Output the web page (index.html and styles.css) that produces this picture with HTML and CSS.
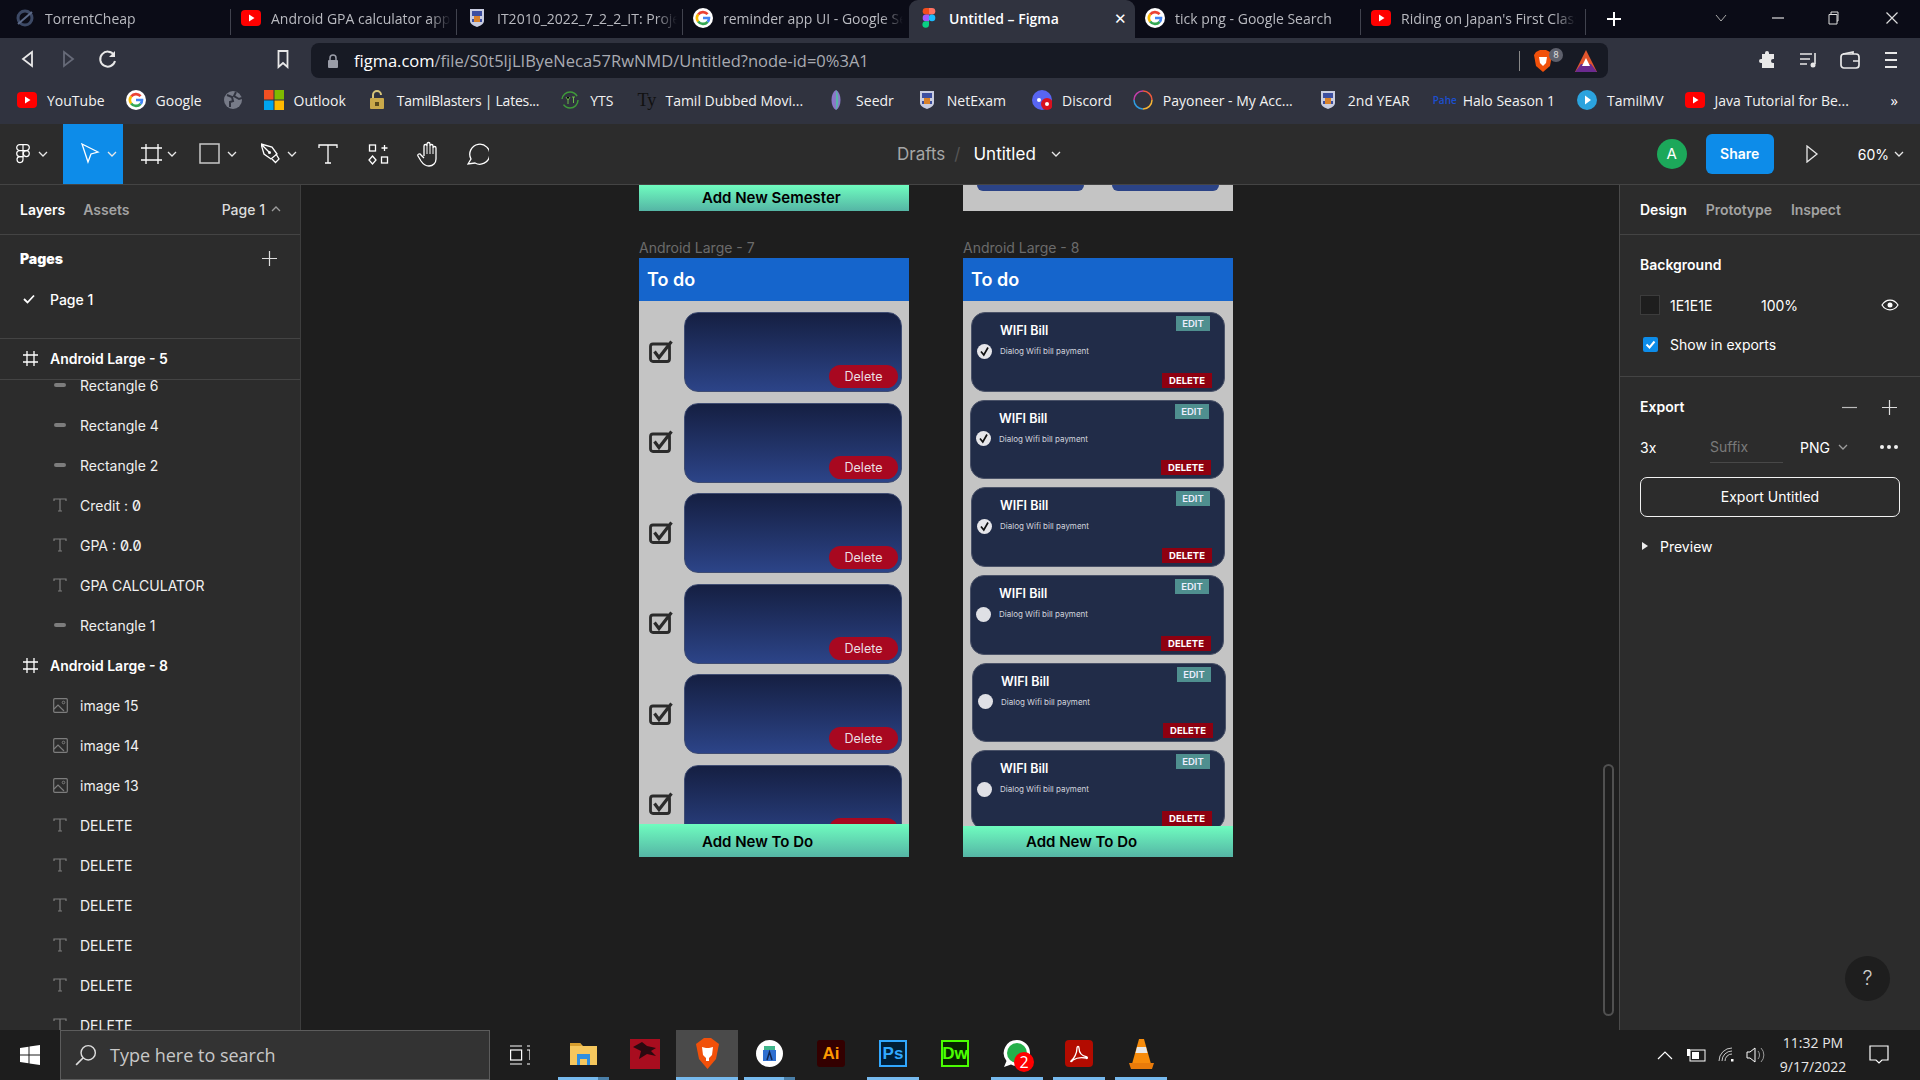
FILE: index.html
```html
<!DOCTYPE html>
<html lang="en">
<head>
  <meta charset="UTF-8" />
  <title>Untitled – Figma</title>
  <link rel="stylesheet" href="styles.css">
</head>
<body>
  <!-- shared icons -->
  <svg class="defs">
    <symbol id="yt" viewBox="0 0 20 20"><rect x="0" y="2" width="20" height="16" rx="4" fill="#f00"/><path d="M8 6.5l5.5 3.5L8 13.5z" fill="#fff"/></symbol>
    <symbol id="goog" viewBox="0 0 20 20"><circle cx="10" cy="10" r="10" fill="#fff"/><path d="M14.6 6.2A6 6 0 0 0 5.2 6.6" fill="none" stroke="#ea4335" stroke-width="2.6"/><path d="M5.2 6.4a6 6 0 0 0 0 7.2" fill="none" stroke="#fbbc05" stroke-width="2.6"/><path d="M5.2 13.4a6 6 0 0 0 9.4.4" fill="none" stroke="#34a853" stroke-width="2.6"/><path d="M14.6 13.9A6 6 0 0 0 16 10H10" fill="none" stroke="#4285f4" stroke-width="2.6"/></symbol>
    <symbol id="crest" viewBox="0 0 16 20"><path d="M1 1h14v12c0 3-4 5-7 6-3-1-7-3-7-6z" fill="#c9cde0"/><path d="M3 3h10v5H3z" fill="#3d4fa0"/><path d="M5 8h6v6H5z" fill="#d9822b"/><path d="M3 11h2v3H3zM11 11h2v3h-2z" fill="#3d4fa0"/></symbol>
    <symbol id="figma" viewBox="0 0 14 20"><path d="M7 0H4a3.3 3.3 0 0 0 0 6.6h3z" fill="#f24e1e"/><path d="M7 0h3a3.3 3.3 0 0 1 0 6.600H7z" fill="#ff7262"/><path d="M7 6.600H4a3.300 3.300 0 0 0 0 6.600h3z" fill="#a259ff"/><circle cx="10" cy="9.900" r="3.300" fill="#1abcfe"/><path d="M7 13.200H4a3.300 3.300 0 1 0 3 3.300z" fill="#0acf83"/></symbol>
    <symbol id="chev" viewBox="0 0 10 6"><path d="M1 1l4 4 4-4" fill="none" stroke="#e8e8e8" stroke-width="1.300"/></symbol>
    <symbol id="text-tool" viewBox="0 0 14 14"><path d="M1 3V1h12v2M7 1v12M5 13h4" fill="none" stroke="#7d7d7d" stroke-width="1.200"/></symbol>
    <symbol id="image" viewBox="0 0 15 15"><rect x=".7" y=".7" width="13.600" height="13.600" rx="1" fill="none" stroke="#7d7d7d" stroke-width="1.200"/><path d="M1 11l4-4 6 6" fill="none" stroke="#7d7d7d" stroke-width="1.200"/><circle cx="10.500" cy="4.500" r="1.300" fill="none" stroke="#7d7d7d"/></symbol>
    <symbol id="frame" viewBox="0 0 15 15"><path d="M4 0v15M11 0v15M0 4h15M0 11h15" fill="none" stroke="#fff" stroke-width="1.300"/></symbol>
    <symbol id="box-check" viewBox="0 0 25 23"><rect x="1.500" y="4" width="19" height="17.500" rx="2.500" fill="none" stroke="#2b2b2b" stroke-width="2.800"/><path d="M5.500 11.500l4.500 6L22.500 1.500" fill="none" stroke="#2b2b2b" stroke-width="3.200"/></symbol>
    <symbol id="tick" viewBox="0 0 15 15"><circle cx="7.500" cy="7.500" r="7.500" fill="#e6e6ea"/><path d="M4 7.500l2.800 3.500 4.200-7.500" fill="none" stroke="#111" stroke-width="1.700"/></symbol>
  </svg>

  <!-- browser tabs -->
  <div class="tabs">
    <div class="tab tab-first"><svg class="fav" viewBox="0 0 20 20"><circle cx="10" cy="10" r="7" fill="none" stroke="#3d4a66" stroke-width="3"/><path d="M3 16L17 4" stroke="#5c6a88" stroke-width="2"/></svg><span>TorrentCheap</span></div>
    <div class="tab"><svg class="fav"><use href="#yt"/></svg><span>Android GPA calculator app</span></div>
    <div class="tab"><svg class="fav"><use href="#crest"/></svg><span>IT2010_2022_7_2_2_IT: Project</span></div>
    <div class="tab"><svg class="fav"><use href="#goog"/></svg><span>reminder app UI - Google Search</span></div>
    <div class="tab tab-active"><svg class="fav"><use href="#figma"/></svg><span>Untitled – Figma</span><b class="tab-close">✕</b></div>
    <div class="tab"><svg class="fav"><use href="#goog"/></svg><span>tick png - Google Search</span></div>
    <div class="tab tab-last"><svg class="fav"><use href="#yt"/></svg><span>Riding on Japan's First Class</span></div>
    <svg class="new-tab" viewBox="0 0 16 16"><path d="M8 1v14M1 8h14" stroke="#fff" stroke-width="2"/></svg>
    <div class="win-controls">
      <svg viewBox="0 0 14 14"><path d="M2 4l5 6 5-6" fill="none" stroke="#aaa"/></svg>
      <svg viewBox="0 0 14 14"><path d="M1 7h12" stroke="#ddd" stroke-width="1.200"/></svg>
      <svg class="win-restore" viewBox="0 0 14 14"><path d="M3 3.500h8v9.500H3zM5 3.500V1h7v9h-1" fill="none" stroke="#ddd"/></svg>
      <svg viewBox="0 0 14 14"><path d="M1.500 1.500l11 11M12.500 1.500l-11 11" stroke="#ddd" stroke-width="1.200"/></svg>
    </div>
  </div>

  <!-- address bar -->
  <div class="addr-row">
    <svg class="nav-btn" viewBox="0 0 40 20"><path d="M25 3l-9 7 9 7z" fill="none" stroke="#e8e8e8" stroke-width="1.800"/></svg>
    <svg class="nav-btn" viewBox="0 0 40 20"><path d="M17 3l9 7-9 7z" fill="none" stroke="#666a78" stroke-width="1.800"/></svg>
    <svg class="nav-btn" viewBox="0 0 40 20"><path d="M27 6a7.500 7.500 0 1 0 1 6" fill="none" stroke="#e8e8e8" stroke-width="2"/><path d="M28 2v6h-6z" fill="#e8e8e8"/></svg>
    <svg class="nav-btn bookmark-btn" viewBox="0 0 40 20"><path d="M15.500 2h9v16l-4.500-4-4.500 4z" fill="none" stroke="#e8e8e8" stroke-width="1.800"/></svg>
    <div class="addr-bar">
      <svg class="lock" viewBox="0 0 12 14"><path d="M3 6V4a3 3 0 0 1 6 0v2" fill="none" stroke="#9a9da8" stroke-width="1.500"/><rect x="1" y="6" width="10" height="8" rx="1" fill="#9a9da8"/></svg>
      <span class="url"><b>figma.com</b>/file/S0t5ljLIByeNeca57RwNMD/Untitled?node-id=0%3A1</span>
      <i class="addr-sep"></i>
      <svg class="brave-shield" viewBox="0 0 20 24"><path d="M3 3l4-2h6l4 2 2 3-2 11-7 6-7-6L1 6z" fill="#f1500a"/><path d="M6 8h8l-1 6-3 3-3-3z" fill="#fff"/></svg>
      <span class="shield-badge">8</span>
      <svg class="rewards" viewBox="0 0 24 24"><path d="M12 1l11 22H1z" fill="#e2552c"/><path d="M1 23l6-8h10l6 8z" fill="#6b2a8f"/><path d="M12 9l4 8H8z" fill="#fff"/></svg>
    </div>
    <div class="addr-tools">
      <svg viewBox="0 0 20 20"><path d="M7 3a2 2 0 0 1 4 0v1h5v5h-1a2 2 0 0 0 0 4h1v5H4v-5H3a2 2 0 0 1 0-4h1V4h3z" fill="#e8e8e8"/></svg>
      <svg viewBox="0 0 20 20"><path d="M1 4h12M1 9h10M1 14h7" stroke="#e8e8e8" stroke-width="1.600"/><path d="M16 3v11" stroke="#e8e8e8" stroke-width="1.600"/><circle cx="14" cy="15" r="2.500" fill="#e8e8e8"/></svg>
      <svg viewBox="0 0 20 20"><rect x="1" y="4" width="18" height="14" rx="3" fill="none" stroke="#e8e8e8" stroke-width="1.700"/><path d="M3 4l10-2v2M13 11h6" fill="none" stroke="#e8e8e8" stroke-width="1.700"/></svg>
      <svg viewBox="0 0 20 20"><path d="M4 3h12M4 10h12M4 17h12" stroke="#e8e8e8" stroke-width="2"/></svg>
    </div>
  </div>

  <!-- bookmarks -->
  <div class="bookmarks">
    <div class="bm"><svg class="fav"><use href="#yt"/></svg>YouTube</div>
    <div class="bm"><svg class="fav"><use href="#goog"/></svg>Google</div>
    <div class="bm"><svg class="fav" viewBox="0 0 20 20"><circle cx="10" cy="10" r="9" fill="#777b88"/><path d="M4 5l5 2 1 4-3 1v5M13 2l-2 4 5 3 3-1" fill="none" stroke="#30333f" stroke-width="2"/></svg></div>
    <div class="bm"><svg class="fav" viewBox="0 0 20 20"><path d="M0 0h9.500v9.500H0z" fill="#f25022"/><path d="M10.500 0H20v9.500h-9.500z" fill="#7fba00"/><path d="M0 10.500h9.500V20H0z" fill="#00a4ef"/><path d="M10.500 10.500H20V20h-9.500z" fill="#ffb900"/></svg>Outlook</div>
    <div class="bm"><svg class="fav" viewBox="0 0 20 20"><rect x="3" y="8" width="14" height="11" rx="1" fill="#c9a94a"/><path d="M6 8V5a4 4 0 0 1 8 0" fill="none" stroke="#d8c67a" stroke-width="2"/><path d="M8 12h4v4H8z" fill="#5a4a1a"/></svg>TamilBlasters | Lates...</div>
    <div class="bm"><svg class="fav" viewBox="0 0 20 20"><circle cx="10" cy="10" r="8" fill="none" stroke="#3f9b3a" stroke-width="1.500" stroke-dasharray="20 6"/><path d="M6 7l2 3 2-3M8 10v4M12 7h3M13.500 7v6" stroke="#6dbb4a"/></svg>YTS</div>
    <div class="bm"><span class="ty">Ty</span>Tamil Dubbed Movi...</div>
    <div class="bm"><svg class="fav" viewBox="0 0 20 20"><path d="M10 0c6 3 6 17 0 20C4 17 4 3 10 0z" fill="#8a78c8"/><path d="M10 0c3 4 3 16 0 20" fill="#58b6a8"/></svg>Seedr</div>
    <div class="bm"><svg class="fav"><use href="#crest"/></svg>NetExam</div>
    <div class="bm"><svg class="fav" viewBox="0 0 20 20"><circle cx="10" cy="10" r="10" fill="#5865f2"/><circle cx="7" cy="10" r="2" fill="#fff"/><circle cx="15" cy="14" r="6" fill="#d8111f"/><circle cx="15" cy="14" r="2" fill="#fff"/></svg>Discord</div>
    <div class="bm"><svg class="fav" viewBox="0 0 20 20"><path d="M10 1a9 9 0 0 1 9 9" fill="none" stroke="#ef5a3c" stroke-width="1.500"/><path d="M19 10a9 9 0 0 1-9 9" fill="none" stroke="#f5b335" stroke-width="1.500"/><path d="M10 19a9 9 0 0 1-9-9" fill="none" stroke="#2f9ce0" stroke-width="1.500"/><path d="M1 10a9 9 0 0 1 9-9" fill="none" stroke="#c23ea8" stroke-width="1.500"/></svg>Payoneer - My Acc...</div>
    <div class="bm"><svg class="fav"><use href="#crest"/></svg>2nd YEAR</div>
    <div class="bm"><span class="pahe">Pahe</span>Halo Season 1</div>
    <div class="bm"><svg class="fav" viewBox="0 0 20 20"><circle cx="10" cy="10" r="10" fill="#2ba3de"/><path d="M8 5.500l6 4.500-6 4.500z" fill="#fff"/></svg>TamilMV</div>
    <div class="bm"><svg class="fav"><use href="#yt"/></svg>Java Tutorial for Be...</div>
    <div class="bm-more">»</div>
  </div>

  <!-- figma toolbar -->
  <div class="toolbar">
    <div class="tool tool-logo">
      <svg class="tool-icon" viewBox="0 0 14 20"><g fill="none" stroke="#fff" stroke-width="1.200"><path d="M7 .6H3.700a3 3 0 0 0 0 6H7zM7 .6h3.300a3 3 0 0 1 0 6H7zM7 6.600H3.700a3 3 0 0 0 0 6H7z"/><circle cx="10.300" cy="9.600" r="3"/><path d="M7 12.600H3.700a3 3 0 1 0 3.300 3z"/></g></svg>
      <svg class="chev"><use href="#chev"/></svg>
    </div>
    <div class="tool tool-on">
      <svg class="tool-icon" viewBox="0 0 22 22"><path d="M1 1l16 8-7 2-3 8z" fill="none" stroke="#fff" stroke-width="1.300"/></svg>
      <svg class="chev"><use href="#chev"/></svg>
    </div>
    <div class="tool">
      <svg class="tool-icon" viewBox="0 0 22 22"><path d="M5 1v20M17 1v20M0 5h21M0 17h21" fill="none" stroke="#fff" stroke-width="1.300"/></svg>
      <svg class="chev"><use href="#chev"/></svg>
    </div>
    <div class="tool tool-rect">
      <svg class="tool-icon" viewBox="0 0 22 22"><rect x="1" y="1" width="19" height="19" fill="none" stroke="#c8c8c8" stroke-width="1.500"/></svg>
      <svg class="chev"><use href="#chev"/></svg>
    </div>
    <div class="tool">
      <svg class="tool-icon" viewBox="0 0 22 22"><path d="M0 1l11 3 5 7-6 5-7-5zM0 1l8 8" fill="none" stroke="#fff" stroke-width="1.300"/><circle cx="8.500" cy="9.500" r="1.500" fill="#fff"/><path d="M11 16l3.500 3.500 3.500-3.500-3-5" fill="none" stroke="#fff" stroke-width="1.300"/></svg>
      <svg class="chev"><use href="#chev"/></svg>
    </div>
    <div class="tool-plain"><svg class="tool-icon" viewBox="0 0 22 22"><path d="M2 5V2h18v3M11 2v18M8 20h6" fill="none" stroke="#fff" stroke-width="1.300"/></svg></div>
    <div class="tool-plain"><svg class="tool-icon" viewBox="0 0 22 22"><g fill="none" stroke="#fff" stroke-width="1.300"><rect x="2.500" y="2" width="6" height="6"/><rect x="14.500" y="14" width="6" height="6"/><path d="M5.500 13l3.500 4-3.500 4-3.500-4zM17.500 2v6M14.500 5h6"/></g></svg></div>
    <div class="tool-plain"><svg class="tool-hand" viewBox="0 0 22 26"><path d="M7 15V5a1.500 1.500 0 0 1 3 0V3a1.500 1.500 0 0 1 3 0v2a1.500 1.500 0 0 1 3 0v2a1.500 1.500 0 0 1 3 0v11c0 4-3 7-7 7-4 0-6-2-8-5l-3-5c-1-2 2-3 3-1l3 3" fill="none" stroke="#fff" stroke-width="1.300"/><path d="M10 5v8M13 5v8M16 7v6" stroke="#fff"/></svg></div>
    <div class="tool-plain"><svg class="tool-icon" viewBox="0 0 22 22"><path d="M1 21l3-5a10 10 0 1 1 4 4z" fill="none" stroke="#fff" stroke-width="1.300"/></svg></div>

    <div class="file-title">
      <span class="drafts">Drafts</span><span class="slash">/</span><span class="file-name">Untitled</span>
      <svg class="chev file-chev"><use href="#chev"/></svg>
    </div>

    <div class="tool-right">
      <div class="avatar">A</div>
      <div class="share">Share</div>
      <svg class="play" viewBox="0 0 14 18"><path d="M2 1l10 8-10 8z" fill="none" stroke="#e8e8e8" stroke-width="1.300"/></svg>
      <span class="zoom-level">60%</span>
      <svg class="chev"><use href="#chev"/></svg>
    </div>
  </div>

  <div class="workspace">
    <!-- layers panel -->
    <aside class="left-panel">
      <div class="panel-tabs left-tabs">
        <span class="on">Layers</span><span>Assets</span>
        <span class="page-pick">Page 1 <svg class="chev flip"><use href="#chev"/></svg></span>
      </div>
      <div class="pages">
        <div class="pages-head"><b>Pages</b><svg class="plus" viewBox="0 0 15 15"><path d="M7.500 0v15M0 7.500h15" stroke="#ddd" stroke-width="1.200"/></svg></div>
        <div class="page-row"><svg viewBox="0 0 12 10"><path d="M1 5l3.500 3.500L11 1.500" fill="none" stroke="#fff" stroke-width="1.800"/></svg>Page 1</div>
      </div>
      <div class="layer-frame layer-sticky"><svg><use href="#frame"/></svg>Android Large - 5</div>
      <div class="layer-list">
        <div class="layer"><i class="dash"></i>Rectangle 6</div>
        <div class="layer"><i class="dash"></i>Rectangle 4</div>
        <div class="layer"><i class="dash"></i>Rectangle 2</div>
        <div class="layer"><svg><use href="#text-tool"/></svg><span>Credit : <span class="zero">0</span></span></div>
        <div class="layer"><svg><use href="#text-tool"/></svg><span>GPA : <span class="zero">0.0</span></span></div>
        <div class="layer"><svg><use href="#text-tool"/></svg>GPA CALCULATOR</div>
        <div class="layer"><i class="dash"></i>Rectangle 1</div>
        <div class="layer-frame"><svg><use href="#frame"/></svg>Android Large - 8</div>
        <div class="layer"><svg class="img-icon"><use href="#image"/></svg>image 15</div>
        <div class="layer"><svg class="img-icon"><use href="#image"/></svg>image 14</div>
        <div class="layer"><svg class="img-icon"><use href="#image"/></svg>image 13</div>
        <div class="layer"><svg><use href="#text-tool"/></svg>DELETE</div>
        <div class="layer"><svg><use href="#text-tool"/></svg>DELETE</div>
        <div class="layer"><svg><use href="#text-tool"/></svg>DELETE</div>
        <div class="layer"><svg><use href="#text-tool"/></svg>DELETE</div>
        <div class="layer"><svg><use href="#text-tool"/></svg>DELETE</div>
        <div class="layer"><svg><use href="#text-tool"/></svg>DELETE</div>
      </div>
    </aside>

    <!-- canvas, frames sit freely on it -->
    <main class="canvas">
      <div class="frame-stub stub-a"><div class="add-bar add-top">Add New Semester</div></div>
      <div class="frame-stub stub-b"><i class="stub-pill"></i><i class="stub-pill"></i></div>

      <div class="art art-a">
        <div class="art-label">Android Large - 7</div>
        <div class="phone">
          <div class="phone-head">To do</div>
          <div class="phone-list list-a">
            <div class="todo-row"><svg class="box-check"><use href="#box-check"/></svg><div class="blank-card"><span class="pill-delete">Delete</span></div></div>
            <div class="todo-row"><svg class="box-check"><use href="#box-check"/></svg><div class="blank-card"><span class="pill-delete">Delete</span></div></div>
            <div class="todo-row"><svg class="box-check"><use href="#box-check"/></svg><div class="blank-card"><span class="pill-delete">Delete</span></div></div>
            <div class="todo-row"><svg class="box-check"><use href="#box-check"/></svg><div class="blank-card"><span class="pill-delete">Delete</span></div></div>
            <div class="todo-row"><svg class="box-check"><use href="#box-check"/></svg><div class="blank-card"><span class="pill-delete">Delete</span></div></div>
            <div class="todo-row"><svg class="box-check"><use href="#box-check"/></svg><div class="blank-card"><span class="pill-delete"></span></div></div>
          </div>
          <div class="add-bar add-a">Add New To Do</div>
        </div>
      </div>

      <div class="art art-b">
        <div class="art-label">Android Large - 8</div>
        <div class="phone">
          <div class="phone-head">To do</div>
          <div class="phone-list list-b">
            <div class="bill"><svg class="radio"><use href="#tick"/></svg><b class="bill-title">WIFI Bill</b><span class="tag-edit">EDIT</span><span class="bill-desc">Dialog Wifi bill payment</span><span class="tag-delete">DELETE</span></div>
            <div class="bill nudge-l"><svg class="radio"><use href="#tick"/></svg><b class="bill-title">WIFI Bill</b><span class="tag-edit">EDIT</span><span class="bill-desc">Dialog Wifi bill payment</span><span class="tag-delete">DELETE</span></div>
            <div class="bill"><svg class="radio"><use href="#tick"/></svg><b class="bill-title">WIFI Bill</b><span class="tag-edit">EDIT</span><span class="bill-desc">Dialog Wifi bill payment</span><span class="tag-delete">DELETE</span></div>
            <div class="bill nudge-l"><i class="radio radio-off"></i><b class="bill-title">WIFI Bill</b><span class="tag-edit">EDIT</span><span class="bill-desc">Dialog Wifi bill payment</span><span class="tag-delete">DELETE</span></div>
            <div class="bill nudge-r"><i class="radio radio-off"></i><b class="bill-title">WIFI Bill</b><span class="tag-edit">EDIT</span><span class="bill-desc">Dialog Wifi bill payment</span><span class="tag-delete">DELETE</span></div>
            <div class="bill"><i class="radio radio-off"></i><b class="bill-title">WIFI Bill</b><span class="tag-edit">EDIT</span><span class="bill-desc">Dialog Wifi bill payment</span><span class="tag-delete">DELETE</span></div>
          </div>
          <div class="add-bar add-b">Add New To Do</div>
        </div>
      </div>

      <i class="canvas-scroll"></i>
    </main>

    <!-- design panel -->
    <aside class="right-panel">
      <div class="panel-tabs right-tabs"><span class="on">Design</span><span>Prototype</span><span>Inspect</span></div>
      <section class="bg-section">
        <b class="sec-title">Background</b>
        <div class="bg-row">
          <i class="swatch"></i><span>1E1E1E</span><span>100%</span>
          <svg class="eye" viewBox="0 0 18 12"><path d="M1 6c4-6.500 12-6.500 16 0-4 6.500-12 6.500-16 0z" fill="none" stroke="#fff" stroke-width="1.200"/><circle cx="9" cy="6" r="2.500" fill="#fff"/></svg>
        </div>
        <label class="export-check"><i class="checkbox"><svg viewBox="0 0 15 15"><path d="M3.500 7.500l3 3 5-6" fill="none" stroke="#fff" stroke-width="2"/></svg></i>Show in exports</label>
      </section>
      <section class="export-section">
        <div class="export-head"><b class="sec-title">Export</b>
          <svg viewBox="0 0 15 15"><path d="M0 7.500h15" stroke="#bbb" stroke-width="1.200"/></svg>
          <svg viewBox="0 0 15 15"><path d="M7.500 0v15M0 7.500h15" stroke="#ddd" stroke-width="1.200"/></svg>
        </div>
        <div class="export-row">
          <span>3x</span><span class="suffix">Suffix</span>
          <span class="png">PNG <svg class="chev dim"><use href="#chev"/></svg></span>
          <span class="dots"><i></i><i></i><i></i></span>
        </div>
        <div class="export-btn">Export Untitled</div>
        <div class="preview-row"><i class="caret"></i>Preview</div>
      </section>
      <div class="help">?</div>
    </aside>
  </div>

  <!-- windows taskbar -->
  <footer class="taskbar">
    <div class="win-logo"><svg viewBox="0 0 20 20"><path d="M0 3l8.500-1.200v7.700H0zM9.500 1.600L20 0v9.500H9.500zM0 10.500h8.500v7.700L0 17zM9.500 10.500H20V20L9.500 18.400z" fill="#fff"/></svg></div>
    <div class="search-box">
      <svg viewBox="0 0 20 20"><circle cx="12" cy="8" r="6.500" fill="none" stroke="#ddd" stroke-width="1.300"/><path d="M7.500 12.500L1 19" stroke="#ddd" stroke-width="1.500"/></svg>
      <span>Type here to search</span>
    </div>
    <div class="task-view"><svg viewBox="0 0 20 20"><path d="M0 1h12M0 19h12" stroke="#fff" stroke-width="1.200"/><rect x=".6" y="5" width="11" height="10" fill="none" stroke="#fff" stroke-width="1.200"/><path d="M17 1h3M17 5h3v10M17 19h3" fill="none" stroke="#fff" stroke-width="1.200"/></svg></div>
    <div class="apps">
      <div class="app run run-short"><svg class="ic-folder" viewBox="0 0 27 23"><path d="M0 1h10l3 3h14v19H0z" fill="#f5c75d"/><path d="M0 1h10l2 3H0z" fill="#d69e2e"/><path d="M7 12h13v11h-3v-6h-7v6H7z" fill="#2f8fdf"/></svg></div>
      <div class="app"><svg class="ic-msi" viewBox="0 0 30 30"><rect width="30" height="30" fill="#a80d1f"/><path d="M3 8l9-5 5 4 9 2-5 3 5 5-9-2-8 5 2-8z" fill="#2a0a10"/></svg></div>
      <div class="app app-active run"><svg class="ic-brave" viewBox="0 0 25 31"><path d="M5 3l4-3h7l4 3 4 3-3 15-8.500 10L4 21 1 6z" fill="#f1500a"/><path d="M7 9l4 1h3l4-1-1 8-3 3v3h-3v-3l-3-3z" fill="#fff"/></svg></div>
      <div class="app run run-short"><svg class="ic-studio" viewBox="0 0 27 27"><circle cx="13.500" cy="13.500" r="13.500" fill="#fff"/><rect x="8" y="6" width="11" height="5" fill="#3fb68b"/><rect x="7" y="10" width="13" height="11" fill="#2f6fd0"/><path d="M11 20l2.500-8 2.500 8" fill="none" stroke="#12264f" stroke-width="1.500"/></svg></div>
      <div class="app"><span class="tile tile-ai">Ai</span></div>
      <div class="app run"><span class="tile tile-ps">Ps</span></div>
      <div class="app"><span class="tile tile-dw">Dw</span></div>
      <div class="app run">
        <svg viewBox="0 0 30 30"><path d="M15 1a13 13 0 0 1 0 26c-2 0-4-.500-6-1.500L2 28l2.500-6A13 13 0 0 1 15 1z" fill="#fff"/><circle cx="15" cy="14" r="10" fill="#25b04a"/></svg>
        <span class="wa-badge">2</span>
      </div>
      <div class="app run"><span class="tile tile-pdf"><svg viewBox="0 0 20 20"><path d="M2 17c3-2 6-8 6-13 0-2 2-2 2 0 0 5 3 8 8 9 1 1 0 2-1 1-5-1-10 0-13 2-1 2-3 2-2 1z" fill="none" stroke="#fff" stroke-width="1.300"/></svg></span></div>
      <div class="app run"><svg class="ic-vlc" viewBox="0 0 25 30"><path d="M10 0h5l7 25H3z" fill="#f78c0c"/><path d="M8 8h9l1.500 6h-12z" fill="#e8e8e8"/><path d="M0 24h25l-2 6H2z" fill="#e97b0a"/></svg></div>
    </div>
    <div class="tray">
      <svg class="t-chev" viewBox="0 0 16 10"><path d="M1 9l7-7 7 7" fill="none" stroke="#fff" stroke-width="1.200"/></svg>
      <svg class="t-batt" viewBox="0 0 20 16"><rect x="4" y="3" width="15" height="11" fill="none" stroke="#fff"/><rect x="6" y="5" width="7" height="7" fill="#fff"/><path d="M1 2v7h3V2" fill="#fff"/></svg>
      <svg class="t-wifi" viewBox="0 0 18 18"><path d="M1 15a13 13 0 0 1 13-13M4 15a10 10 0 0 1 10-10M7 15a7 7 0 0 1 7-7" fill="none" stroke="#c8c8c8"/><rect x="13" y="13" width="2.500" height="2.500" fill="#fff"/></svg>
      <svg class="t-vol" viewBox="0 0 20 18"><path d="M1 6h3l5-4v14l-5-4H1z" fill="none" stroke="#fff"/><path d="M12 5a6 6 0 0 1 0 8M15 2a10 10 0 0 1 0 14" fill="none" stroke="#999"/></svg>
      <div class="clock"><span>11:32 PM</span><span>9/17/2022</span></div>
      <svg class="t-note" viewBox="0 0 20 20"><path d="M1 1h18v14h-6l-3 3-3-3H1z" fill="none" stroke="#fff" stroke-width="1.200"/></svg>
    </div>
  </footer>
</body>
</html>
```

FILE: styles.css
```css
* { box-sizing: border-box; }
html, body { margin: 0; height: 100%; }
body {
  width: 1920px;
  height: 1080px;
  overflow: hidden;
  display: flex;
  flex-direction: column;
  font-family: "Inter", "Liberation Sans", sans-serif;
  color: #fff;
  background: #1e1e1e;
}
i { display: block; font-style: normal; }
.defs { display: none; }
.fav { width: 20px; height: 20px; flex: none; }

/* browser tabs */
.tabs {
  flex: 0 0 38px;
  display: flex;
  background: #0b0c17;
  font-family: "Open Sans", sans-serif;
  font-size: 14px;
}
.tab {
  flex: 0 0 226px;
  display: flex;
  align-items: center;
  gap: 10px;
  padding: 0 6px 2px 10px;
  color: #b9bac0;
  position: relative;
  overflow: hidden;
  white-space: nowrap;
}
.tab span {
  flex: 1;
  overflow: hidden;
  -webkit-mask-image: linear-gradient(to right, #000 88%, transparent);
  mask-image: linear-gradient(to right, #000 88%, transparent);
}
.tab::after {
  content: "";
  position: absolute;
  right: 0;
  top: 9px;
  bottom: 3px;
  width: 1px;
  background: #41434e;
}
.tab-first { flex-basis: 231px; padding-left: 15px; }
.tab-active {
  background: #30333f;
  color: #fff;
  font-weight: 600;
  border-radius: 9px 9px 0 0;
  flex-basis: 226px;
}
.tab-active span { -webkit-mask-image: none; mask-image: none; }
.tab-active::after, .tab:nth-child(4)::after { display: none; }
.tab-close { font-size: 15px; font-weight: 400; margin-right: 2px; }
.tab-last { flex-basis: 225px; padding-right: 10px; }
.new-tab { width: 16px; height: 16px; margin: 11px 0 0 20px; }
.win-controls { margin-left: auto; display: flex; }
.win-controls svg { width: 14px; height: 14px; margin: 11px 21.5px 0; }
.win-controls .win-restore { transform: translateX(-2px); }

/* address row */
.addr-row {
  flex: 0 0 40px;
  display: flex;
  align-items: center;
  padding-left: 7px;
  background: #30333f;
}
.nav-btn { width: 40px; height: 20px; flex: none; margin-top: 2px; }
.bookmark-btn { margin-left: 136px; }
.addr-bar {
  margin-left: 8px;
  width: 1297px;
  height: 35px;
  margin-top: 5px;
  border-radius: 8px;
  background: #171a24;
  display: flex;
  align-items: center;
  padding-left: 16px;
  position: relative;
}
.lock { width: 12px; height: 14px; margin-right: 15px; }
.url {
  font-family: "Open Sans", sans-serif;
  font-size: 16.500px;
  color: #a9abb2;
  white-space: nowrap;
}
.url b { color: #fff; font-weight: 400; }
.addr-sep { margin-left: auto; width: 1px; height: 20px; background: #888; }
.brave-shield { width: 20px; height: 24px; margin-left: 13px; }
.shield-badge {
  position: absolute;
  right: 45px;
  top: 5px;
  width: 14px;
  height: 14px;
  border-radius: 50%;
  background: #5e606c;
  font-size: 9px;
  line-height: 14px;
  text-align: center;
  color: #ddd;
}
.rewards { width: 24px; height: 24px; margin: 0 10px 0 21px; }
.addr-tools { display: flex; gap: 21px; margin-left: 150px; margin-top: 4px; }
.addr-tools svg { width: 20px; height: 20px; }

/* bookmarks */
.bookmarks {
  flex: 0 0 46px;
  display: flex;
  align-items: center;
  gap: 21px;
  padding: 0 0 2px 17px;
  background: #30333f;
  font-family: "Open Sans", sans-serif;
  font-size: 14px;
  white-space: nowrap;
  position: relative;
}
.bm { display: flex; align-items: center; gap: 10px; color: #f2f2f2; }
.bm:nth-child(5) { letter-spacing: -.25px; }
.bm:nth-child(7) { margin-left: 3px; }
.bm:nth-child(8) { margin-left: 2px; }
.bm:nth-child(9) { margin-left: 2px; }
.bm:nth-child(10) { margin-left: 5px; }
.bm:nth-child(12) { margin-left: 4px; }
.bm:nth-child(13) { margin-left: 2px; }
.bm:nth-child(14) { margin-left: 1px; }
.ty { font-family: "Liberation Serif", serif; color: #111; font-size: 18px; width: 18px; }
.pahe { font-size: 10px; color: #1b4fd0; font-weight: 600; width: 20px; }
.bm-more { position: absolute; right: 22px; font-size: 15px; }

/* figma toolbar */
.toolbar {
  flex: 0 0 61px;
  display: flex;
  align-items: stretch;
  background: #2c2c2c;
  border-bottom: 1px solid #444;
}
.tool {
  flex: 0 0 60px;
  display: flex;
  align-items: center;
  gap: 4px;
  padding-left: 18px;
}
.tool-logo { flex-basis: 63px; padding-left: 16px; gap: 8px; }
.tool-logo .tool-icon { width: 14px; height: 20px; }
.tool-on { background: #0d8ce9; }
.tool-rect { padding-left: 16px; gap: 6px; }
.tool-plain { flex: 0 0 50px; display: flex; align-items: center; justify-content: center; }
.tool-icon { width: 22px; height: 22px; }
.tool-hand { width: 22px; height: 26px; }
.chev { width: 10px; height: 6px; flex: none; }
.flip { transform: rotate(180deg); opacity: .6; }
.dim { opacity: .6; }
.file-title {
  margin-left: 394px;
  display: flex;
  align-items: center;
  font-size: 17px;
}
.drafts { color: #a6a6a6; }
.slash { color: #555; margin: 0 13px 0 9px; }
.file-chev { margin-left: 15px; }
.tool-right {
  margin-left: auto;
  display: flex;
  align-items: center;
  padding-right: 16px;
}
.avatar {
  width: 30px;
  height: 30px;
  border-radius: 50%;
  background: #1ca85a;
  font-size: 15px;
  line-height: 30px;
  text-align: center;
}
.share {
  width: 68px;
  height: 40px;
  margin-left: 19px;
  border-radius: 6px;
  background: #0d8ce9;
  font-size: 14px;
  font-weight: 600;
  line-height: 40px;
  text-align: center;
}
.play { width: 14px; height: 18px; margin-left: 31px; }
.zoom-level { font-size: 14px; margin: 0 5px 0 39px; }

/* main area */
.workspace { flex: 1; min-height: 0; display: flex; }
.left-panel, .right-panel {
  flex: 0 0 301px;
  background: #2c2c2c;
  font-size: 14px;
  display: flex;
  flex-direction: column;
  overflow: hidden;
}
.left-panel { border-right: 1px solid #3e3e3e; }
.right-panel { border-left: 1px solid #4a4a4a; position: relative; }
.panel-tabs {
  flex: 0 0 50px;
  display: flex;
  align-items: center;
  gap: 18px;
  padding: 0 0 1px 20px;
  font-weight: 600;
  color: #a3a3a3;
  border-bottom: 1px solid #444;
}
.right-tabs { gap: 19px; letter-spacing: -.05px; }
.panel-tabs .on { color: #fff; }
.page-pick { margin-left: auto; margin-right: 19px; color: #ddd; font-weight: 500; display: flex; align-items: center; gap: 6px; }
.pages { flex: 0 0 104px; padding: 13px 23px 0 20px; border-bottom: 1px solid #444; }
.pages-head { display: flex; justify-content: space-between; align-items: center; height: 20px; font-weight: 600; }
.plus { width: 15px; height: 15px; }
.page-row { display: flex; align-items: center; height: 20px; margin-top: 21px; font-weight: 500; padding-left: 3px; }
.page-row svg { width: 12px; height: 10px; margin-right: 15px; }
.layer-sticky { border-bottom: 1px solid #444; flex: 0 0 41px !important; }
.layer-frame {
  flex: 0 0 40px;
  height: 40px;
  display: flex;
  align-items: center;
  padding: 0 0 2px 23px;
  font-weight: 600;
}
.layer-frame svg { width: 15px; height: 15px; margin-right: 12px; }
.layer-list { flex: 1; min-height: 0; overflow: hidden; }
.layer-list > :first-child { margin-top: -14px; }
.layer {
  height: 40px;
  display: flex;
  align-items: center;
  padding: 0 0 2px 53px;
  color: #f0f0f0;
}
.layer svg { width: 14px; height: 14px; margin-right: 13px; flex: none; }
.layer .img-icon { width: 15px; height: 15px; margin-right: 12px; }
.dash { width: 12px; height: 4px; margin: 0 14px 0 1px; border-radius: 2px; background: #7d7d7d; }
.zero { font-feature-settings: "zero"; font-weight: 500; }

/* canvas */
.canvas { flex: 1; position: relative; overflow: hidden; background: #1e1e1e; }
.frame-stub { position: absolute; top: 0; width: 270px; height: 26px; }
.stub-a { left: 338px; }
.stub-b {
  left: 662px;
  background: #c4c4c4;
  display: flex;
  gap: 28px;
  padding-left: 14px;
}
.stub-pill { width: 107px; height: 6px; background: #2b4386; border-radius: 0 0 12px 12px; }
.add-bar {
  height: 100%;
  padding-left: 63px;
  background: linear-gradient(#6ffcbf, #55b5a5);
  color: #000;
  font-size: 15px;
  font-weight: 600;
  display: flex;
  align-items: center;
}
.add-top { padding-bottom: 2px; }
.art { position: absolute; top: 53px; width: 270px; height: 619px; display: flex; flex-direction: column; }
.art-a { left: 338px; }
.art-b { left: 662px; }
.art-label { height: 20px; font-size: 14px; line-height: 20px; color: #6b6b6b; }
.phone { flex: 1; min-height: 0; display: flex; flex-direction: column; background: #c4c4c4; }
.phone-head {
  flex: none;
  height: 43px;
  padding: 1px 0 0 8px;
  background: #1565cc;
  font-size: 18px;
  font-weight: 600;
  line-height: 42px;
}
.phone-list { flex: 1; min-height: 0; overflow: hidden; display: flex; flex-direction: column; }
.list-a { gap: 10.500px; padding: 11px 7px 0 10px; }
.list-b { gap: 8.200px; padding: 11px 8px 0 8px; }
.add-a { flex: 0 0 33px; padding-top: 2px; }
.add-b { flex: 0 0 31px; }

.todo-row { flex: none; display: flex; align-items: center; gap: 10px; }
.box-check { width: 25px; height: 23px; flex: none; margin-bottom: 2px; }
.blank-card {
  flex: 1;
  height: 80px;
  padding: 0 3px 3px 0;
  display: flex;
  align-items: flex-end;
  justify-content: flex-end;
  border-radius: 14px;
  border: 1px solid #3f4c72;
  background: linear-gradient(#151f42, #2c4488);
}
.pill-delete {
  width: 69px;
  height: 23px;
  border-radius: 12px;
  background: #a80820;
  color: #eadfe2;
  font-size: 12.500px;
  line-height: 23px;
  text-align: center;
}
.bill {
  flex: none;
  height: 79.500px;
  padding: 3px 12px 3px 5px;
  display: grid;
  grid-template-columns: 23px 1fr 50px;
  grid-template-rows: 27px 16px 1fr;
  border: 1px solid #4a5268;
  border-radius: 14px;
  background: #212c48;
}
.nudge-l { transform: translateX(-1px); }
.nudge-r { transform: translateX(1px); }
.radio { grid-column: 1; grid-row: 2; width: 15px; height: 15px; align-self: center; }
.radio-off { border-radius: 50%; background: #dfe0e5; }
.bill-title { grid-column: 2; grid-row: 1; margin-top: 8px; font-size: 12.500px; font-weight: 600; line-height: 14px; }
.tag-edit {
  grid-column: 3;
  grid-row: 1;
  justify-self: end;
  width: 34px;
  height: 15px;
  margin-right: 2px;
  background: #4f8f8f;
  font-size: 9.500px;
  font-weight: 600;
  line-height: 15px;
  text-align: center;
  color: #eef;
}
.bill-desc { grid-column: 2 / 4; grid-row: 2; align-self: center; font-size: 8px; color: #d2d5de; }
.tag-delete {
  grid-column: 3;
  grid-row: 3;
  align-self: end;
  height: 15px;
  background: #8e0010;
  font-size: 9.500px;
  font-weight: 700;
  line-height: 15px;
  text-align: center;
}
.canvas-scroll {
  position: absolute;
  left: 1302px;
  top: 579px;
  width: 11px;
  height: 252px;
  border: 2px solid #505050;
  border-radius: 6px;
}

/* design panel */
.bg-section { flex: 0 0 142px; padding: 21px 20px 0; border-bottom: 1px solid #444; }
.sec-title { display: block; font-weight: 600; line-height: 18px; }
.bg-row {
  display: grid;
  grid-template-columns: 30px 91px 1fr 18px;
  align-items: center;
  height: 20px;
  margin: 21px 1px 0 0;
}
.swatch { width: 20px; height: 20px; background: #1e1e1e; border: 1px solid #3c3c3c; }
.eye { width: 18px; height: 12px; }
.export-check { display: flex; align-items: center; height: 20px; margin-top: 19px; padding-left: 3px; }
.checkbox { width: 15px; height: 15px; margin-right: 12px; border-radius: 2px; background: #0d8ce9; }
.checkbox svg { display: block; width: 15px; height: 15px; }
.export-section { padding: 20px 20px 0; }
.export-head { display: flex; align-items: center; height: 20px; padding-right: 3px; }
.export-head .sec-title { flex: 1; }
.export-head svg { width: 15px; height: 15px; margin-left: 25px; }
.export-row {
  display: grid;
  grid-template-columns: 70px 90px 1fr 18px;
  grid-template-rows: 20px;
  align-items: center;
  height: 20px;
  margin: 20px 2px 0 0;
}
.suffix {
  width: 73px;
  height: 32px;
  line-height: 32px;
  color: #7a7a7a;
  border-bottom: 1px solid #484848;
}
.png { display: flex; align-items: center; gap: 8px; }
.dots { display: flex; justify-content: space-between; }
.dots i { width: 4px; height: 4px; border-radius: 50%; background: #f0f0f0; }
.export-btn {
  height: 40px;
  margin-top: 20px;
  border: 1px solid #f2f2f2;
  border-radius: 7px;
  line-height: 37px;
  text-align: center;
}
.preview-row { display: flex; align-items: center; height: 20px; margin-top: 19px; }
.caret {
  margin: 0 12px 0 2px;
  border-left: 6px solid #eee;
  border-top: 4px solid transparent;
  border-bottom: 4px solid transparent;
}
.help {
  position: absolute;
  right: 30px;
  bottom: 29px;
  width: 45px;
  height: 45px;
  border-radius: 50%;
  background: #1e1e1e;
  color: #ccc;
  font-size: 20px;
  font-weight: 300;
  line-height: 45px;
  text-align: center;
}

/* taskbar */
.taskbar {
  flex: 0 0 50px;
  display: flex;
  background: #1d1d1d;
  font-family: "Open Sans", sans-serif;
}
.win-logo { flex: 0 0 60px; display: flex; align-items: center; justify-content: center; }
.win-logo svg { width: 20px; height: 20px; }
.search-box {
  flex: 0 0 430px;
  display: flex;
  align-items: center;
  padding-left: 14px;
  background: #333;
  border: 1px solid #5c5c5c;
  color: #c8c8c8;
  font-size: 18px;
}
.search-box svg { width: 22px; height: 22px; margin-right: 13px; }
.task-view { flex: 0 0 61px; display: flex; align-items: center; justify-content: center; padding-right: 2px; }
.task-view svg { width: 20px; height: 20px; }
.apps { display: flex; margin-left: 1px; }
.app {
  flex: 0 0 62px;
  width: 62px;
  height: 50px;
  padding-bottom: 3px;
  display: flex;
  align-items: center;
  justify-content: center;
  position: relative;
}
.app > svg { width: 30px; height: 30px; }
.app > .ic-folder { width: 27px; height: 23px; }
.app > .ic-brave { width: 25px; height: 31px; }
.app > .ic-studio { width: 27px; height: 27px; }
.app > .ic-vlc { width: 25px; height: 30px; }
.app-active { background: #4a4a4a; }
.run::after {
  content: "";
  position: absolute;
  left: 5px;
  right: 5px;
  bottom: 0;
  height: 3px;
  background: #76b9ed;
}
.app-active.run::after { left: 0; right: 0; }
.run-short::after { left: 6px; right: 16px; }
.run-short::before {
  content: "";
  position: absolute;
  right: 5px;
  bottom: 0;
  width: 11px;
  height: 3px;
  background: #4a7fa8;
}
.tile {
  width: 28px;
  height: 27px;
  display: flex;
  align-items: center;
  justify-content: center;
  font-family: "Liberation Sans", sans-serif;
  font-size: 17px;
  font-weight: 700;
}
.tile-ai { background: #330000; color: #ff9a00; border-radius: 3px; }
.tile-ps { background: #001e36; color: #31a8ff; border: 2px solid #31a8ff; }
.tile-dw { background: #072401; color: #4aff00; border: 2px solid #4aff00; }
.tile-pdf { background: #b30b00; border-radius: 4px; }
.tile-pdf svg { width: 20px; height: 20px; }
.wa-badge {
  position: absolute;
  left: 28px;
  top: 22px;
  width: 20px;
  height: 20px;
  border-radius: 50%;
  background: #f00;
  font-size: 16px;
  line-height: 20px;
  text-align: center;
}
.tray { margin-left: auto; display: flex; align-items: center; padding-right: 31px; font-size: 14px; color: #e8e8e8; }
.t-chev { width: 16px; height: 10px; }
.t-batt { width: 20px; height: 16px; margin-left: 13px; }
.t-wifi { width: 18px; height: 18px; margin-left: 12px; }
.t-vol { width: 20px; height: 18px; margin-left: 10px; }
.clock { width: 80px; margin-left: 7px; display: flex; flex-direction: column; align-items: center; gap: 4px; line-height: 20px; }
.t-note { width: 20px; height: 20px; margin-left: 16px; }
```
